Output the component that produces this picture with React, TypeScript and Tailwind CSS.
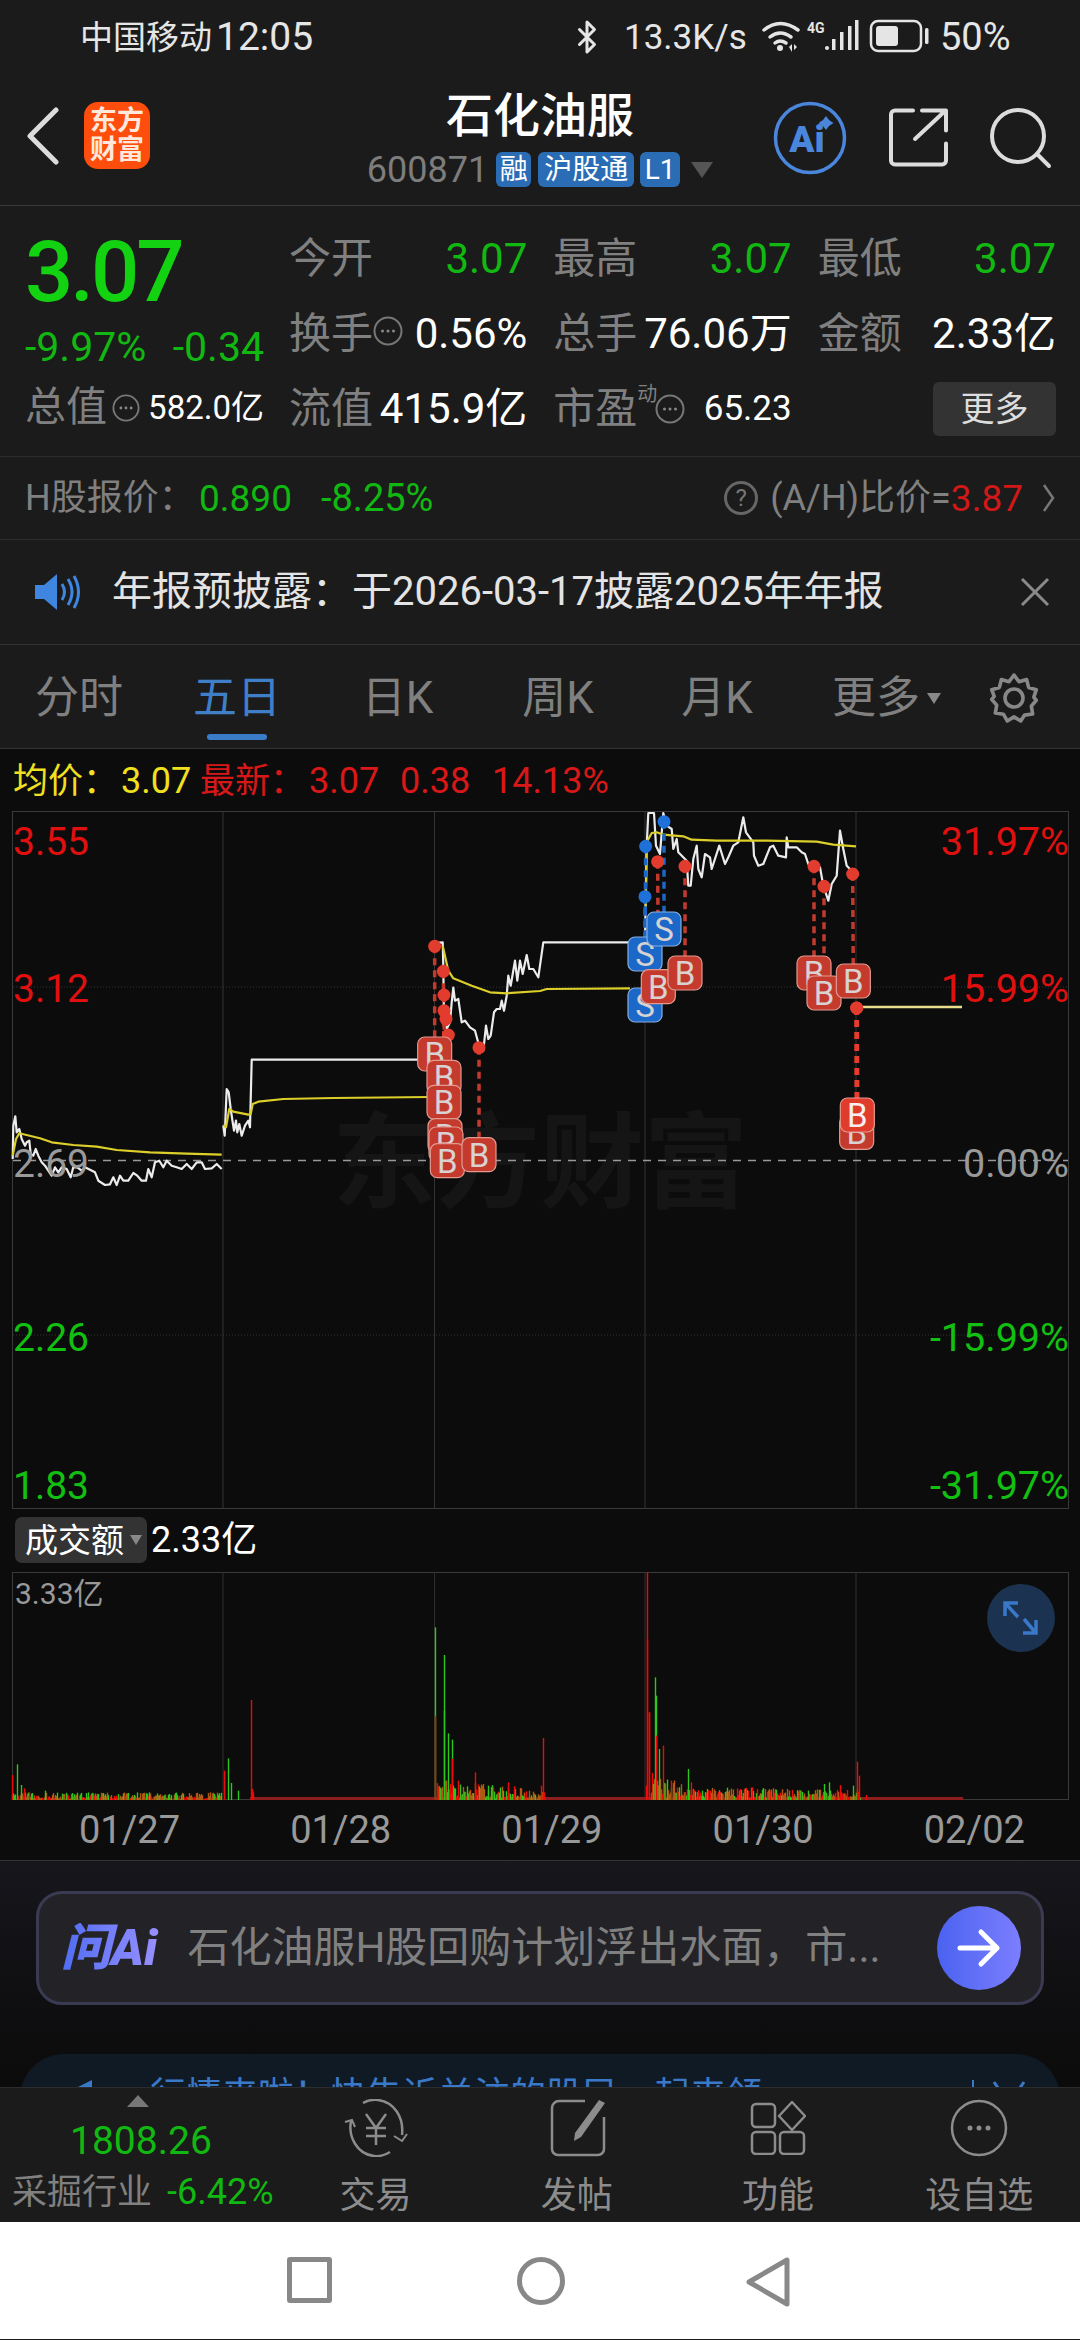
import { Bluetooth } from "lucide-react";

const fontStack = "[font-family:Roboto,'Noto_Sans_CJK_SC',sans-serif]";

// zoom-crop coordinates to page coordinates
function toPoints(raw: string, ox: number, oy: number) {
  return raw
    .trim()
    .split(/\s+/)
    .map((p) => {
      const [x, y] = p.split(",").map(Number);
      return `${(ox + x / 3).toFixed(1)},${(oy + y / 3).toFixed(1)}`;
    })
    .join(" ");
}

const day1Price = toPoints(
  "38,480 40,380 46,352 50,400 58,390 65,420 75,440 80,430 88,425 92,465 100,470 107,450 115,470 125,490 135,500 145,515 155,530 165,505 175,520 185,505 200,510 212,535 220,505 232,505 245,515 255,505 270,512 285,520 295,545 315,558 330,556 340,535 350,558 360,530 370,545 385,545 400,522 412,530 425,545 438,545 445,510 455,535 465,490 478,485 490,505 500,485 515,500 530,505 545,510 560,495 575,510 590,490 605,490 615,510 635,508 650,495 665,510",
  0,
  1000,
);
const day1Avg = toPoints(
  "38,470 48,420 58,403 120,418 155,430 220,438 290,443 350,453 450,460 560,464 665,467",
  0,
  1000,
);
const day2Price = toPoints(
  "670,380 674,410 680,270 686,280 692,330 698,370 702,395 708,365 712,400 718,375 725,410 735,380 745,365 750,385 755,182 1255,182",
  0,
  1000,
);
const day2Avg = toPoints(
  "670,378 678,385 688,330 700,338 745,347 752,345 758,315 775,308 850,300 1000,297 1290,294",
  0,
  1000,
);
const day3Price = toPoints(
  "104,462 128,460 130,530 132,700 140,720 150,700 155,640 160,596 165,635 175,630 185,700 195,695 210,715 225,725 240,780 250,785 258,710 265,750 272,740 282,670 290,660 300,660 305,635 312,665 320,620 325,560 332,590 345,515 352,575 360,515 368,555 380,498 388,540 400,540 415,565 430,460 690,460",
  400,
  790,
);
const day3Avg = toPoints(
  "128,470 145,545 160,568 215,590 270,610 320,613 420,606 440,600 690,598",
  400,
  790,
);
const day4Price = toPoints(
  "735,460 737,330 740,170 745,72 762,72 768,170 780,195 790,72 800,110 815,120 820,180 830,150 835,190 860,215 865,290 872,290 880,210 890,170 895,240 905,265 915,195 930,205 935,240 958,170 975,225 985,205 1000,170 1015,160 1030,85 1038,130 1060,160 1062,200 1075,230 1090,225 1110,175 1120,170 1135,200 1158,205 1160,145 1165,175 1190,175 1205,190 1215,195 1225,225 1260,235 1270,290 1285,335 1295,285 1310,260 1320,125 1330,180 1340,230 1355,245",
  400,
  790,
);
const day4Avg = toPoints(
  "737,370 740,160 755,132 770,130 790,137 850,142 875,152 950,155 1100,155 1250,158 1300,167 1368,172",
  400,
  790,
);

type Mark = { kind: "B" | "S"; dx: number; dy: number; bx: number; by: number };

const marks: Mark[] = [
  { kind: "B", dx: 104, dy: 472, bx: 104, by: 795 },
  { kind: "B", dx: 130, dy: 547, bx: 132, by: 865 },
  { kind: "B", dx: 132, dy: 618, bx: 132, by: 940 },
  { kind: "B", dx: 132, dy: 665, bx: 135, by: 1040 },
  { kind: "B", dx: 138, dy: 690, bx: 138, by: 1065 },
  { kind: "B", dx: 145, dy: 738, bx: 142, by: 1115 },
  { kind: "B", dx: 237, dy: 776, bx: 237, by: 1097 },
  { kind: "S", dx: 735, dy: 323, bx: 735, by: 648 },
  { kind: "S", dx: 737, dy: 172, bx: 735, by: 495 },
  { kind: "B", dx: 773, dy: 218, bx: 775, by: 593 },
  { kind: "S", dx: 792, dy: 98, bx: 792, by: 420 },
  { kind: "B", dx: 855, dy: 232, bx: 855, by: 552 },
  { kind: "B", dx: 1242, dy: 232, bx: 1242, by: 552 },
  { kind: "B", dx: 1272, dy: 292, bx: 1272, by: 612 },
  { kind: "B", dx: 1358, dy: 255, bx: 1360, by: 576 },
  { kind: "B", dx: 1370, dy: 657, bx: 1370, by: 1030 },
  { kind: "B", dx: 1370, dy: 657, bx: 1372, by: 978 },
];

const gridX = [223, 434.5, 645, 856];

function PriceChart() {
  return (
    <svg width={1080} height={698} viewBox="0 812 1080 698" className="block">
      <text x={540} y={1201} textAnchor="middle" fontSize={104} fontWeight={700} fill="#151515">
        东方财富
      </text>
      <rect x={12.5} y={812.5} width={1056} height={697} fill="none" stroke="#3a3a3a" />
      {gridX.map((x) => (
        <line key={x} x1={x} x2={x} y1={812} y2={1510} stroke="#333" />
      ))}
      <line x1={13} x2={1068} y1={988} y2={988} stroke="#333" strokeDasharray="1 2" />
      <line x1={13} x2={1068} y1={1336} y2={1336} stroke="#333" strokeDasharray="1 2" />
      <line x1={13} x2={1068} y1={1161.5} y2={1161.5} stroke="#999" strokeWidth={1.5} strokeDasharray="8 7" />

      {[day1Price, day2Price, day3Price, day4Price].map((pts, i) => (
        <polyline key={i} points={pts} fill="none" stroke="#ececec" strokeWidth={2.2} strokeLinejoin="round" />
      ))}
      {[day1Avg, day2Avg, day3Avg, day4Avg].map((pts, i) => (
        <polyline key={i} points={pts} fill="none" stroke="#dccf2a" strokeWidth={2.2} strokeLinejoin="round" />
      ))}
      <line x1={856} x2={962} y1={1008} y2={1008} stroke="#e8de8c" strokeWidth={2.4} />

      <g fontSize={39}>
        <text x={13} y={856} fill="#e01010">3.55</text>
        <text x={13} y={1003} fill="#e01010">3.12</text>
        <text x={13} y={1178} fill="#999">2.69</text>
        <text x={13} y={1352} fill="#12c012">2.26</text>
        <text x={13} y={1500} fill="#12c012">1.83</text>
      </g>
      <g fontSize={39.5} textAnchor="end">
        <text x={1069} y={856} fill="#e01010">31.97%</text>
        <text x={1069} y={1003} fill="#e01010">15.99%</text>
        <text x={1069} y={1178} fill="#999">0.00%</text>
        <text x={1069} y={1352} fill="#12c012">-15.99%</text>
        <text x={1069} y={1500} fill="#12c012">-31.97%</text>
      </g>

      {marks.map((m, i) => {
        const red = m.kind === "B";
        const color = red ? "#c23a2e" : "#1c66c4";
        const bright = i >= 15;
        return (
          <line
            key={i}
            x1={400 + m.dx / 3}
            y1={790 + m.dy / 3}
            x2={400 + m.bx / 3}
            y2={790 + m.by / 3}
            stroke={bright ? "#e63c2e" : color}
            strokeWidth={bright ? 4.5 : 3.5}
            strokeDasharray="7 5"
          />
        );
      })}
      {marks.map((m, i) => (
        <circle
          key={i}
          cx={400 + m.dx / 3}
          cy={790 + m.dy / 3}
          r={6.5}
          fill={m.kind === "B" ? "#e23c2e" : "#1f70d8"}
        />
      ))}
      {marks.map((m, i) => {
        const x = 400 + m.bx / 3;
        const y = 790 + m.by / 3;
        const red = m.kind === "B";
        return (
          <g key={i}>
            <rect
              x={x - 17}
              y={y - 17}
              width={34}
              height={34}
              rx={7}
              fill={red ? (i === 16 ? "#e03c2c" : "#c43b2e") : "#1b68c8"}
              stroke={red ? "#e29a90" : "#86aee0"}
              strokeWidth={1.2}
            />
            <text x={x} y={y + 12} textAnchor="middle" fontSize={33} fill={i === 16 ? "#f8eeee" : "#d8d2d2"}>
              {m.kind}
            </text>
          </g>
        );
      })}
    </svg>
  );
}

type Bar = { x: number; top: number; c: string };

const RED = "#ee0a0a";
const GREEN = "#2cc81c";

function rnd(i: number) {
  const v = Math.sin(i * 12.9898) * 43758.5453;
  return v - Math.floor(v);
}

function volumeBars() {
  const bars: Bar[] = [];
  const spikes: [number, number, string][] = [
    [18, 828, RED], [24, 796, GREEN], [30, 858, GREEN], [35, 868, RED], [42, 880, RED], [66, 875, GREEN],
    [325, 815, RED], [331, 778, GREEN], [336, 852, GREEN], [345, 875, GREEN], [365, 603, RED], [366, 870, RED], [368, 880, RED],
    [631, 385, GREEN], [631, 652, RED], [644, 468, GREEN], [645, 635, GREEN], [651, 703, GREEN], [656, 722, GREEN],
    [656, 780, RED], [665, 845, RED], [690, 820, RED], [708, 860, GREEN], [737, 850, RED], [747, 862, RED],
    [788, 717, RED], [786, 860, RED], [790, 880, RED],
    [938, 860, RED], [939, 220, RED], [940, 420, RED], [942, 640, RED], [943, 640, RED], [951, 535, GREEN], [953, 590, GREEN], [953, 710, RED],
    [957, 750, GREEN], [963, 740, RED], [975, 845, RED], [999, 810, GREEN], [1003, 850, RED], [1020, 875, GREEN],
    [1075, 870, RED], [1092, 865, RED], [1197, 855, GREEN], [1203, 850, GREEN], [1220, 858, RED], [1238, 860, GREEN],
    [1245, 788, RED], [1247, 830, RED], [1258, 888, RED],
  ];
  const noise: [number, number, number][] = [
    [18, 322, 20],
    [635, 790, 62],
    [945, 1010, 80],
    [1010, 1130, 34],
    [1130, 1250, 30],
  ];
  noise.forEach(([from, to, max], n) => {
    for (let d = from; d < to; d += 1.5) {
      const r = rnd(d + n * 7);
      const decay = n === 1 ? 1 - (d - from) / 260 : n === 2 ? 1 - (d - from) / 110 : 1;
      const h = 4 + r * max * decay;
      bars.push({ x: d, top: 904 - h, c: rnd(d * 3.1) > 0.5 ? "#b05a14" : rnd(d) > 0.55 ? GREEN : RED });
    }
  });
  spikes.forEach(([x, top, c]) => bars.push({ x, top, c }));
  return bars;
}

function VolumeChart() {
  const bars = volumeBars();
  return (
    <svg width={1080} height={228} viewBox="0 1573 1080 228" className="block">
      <line x1={12} x2={1069} y1={1573.5} y2={1573.5} stroke="#3a3a3a" />
      <line x1={12} x2={1069} y1={1800.5} y2={1800.5} stroke="#3a3a3a" />
      <line x1={12.5} x2={12.5} y1={1573} y2={1801} stroke="#3a3a3a" />
      <line x1={1068.5} x2={1068.5} y1={1573} y2={1801} stroke="#3a3a3a" />
      {gridX.map((x) => (
        <line key={x} x1={x} x2={x} y1={1573} y2={1801} stroke="#2e2e2e" />
      ))}
      <rect x={250} y={1798} width={713} height={3} fill="#8c1e1e" />
      {bars.map((b, i) => {
        const x = Math.round(b.x / 1.452) + 0.5;
        return <line key={i} x1={x} x2={x} y1={1500 + b.top / 3} y2={1801} stroke={b.c} strokeWidth={1.4} />;
      })}
      <text x={15} y={1605} fontSize={30} fill="#999">3.33亿</text>
      <circle cx={1021} cy={1619} r={34} fill="#1b3350" />
      <g stroke="#3a78c8" strokeWidth={3.5} fill="none">
        <path d="M1005 1617v-13h13" />
        <path d="M1006 1605l12 13" />
        <path d="M1036 1621v13h-13" />
        <path d="M1035 1633l-11-13" />
      </g>
    </svg>
  );
}

function DotCircle({ size }: { size: number }) {
  return (
    <svg width={size} height={size} viewBox="0 0 30 30" className="shrink-0">
      <circle cx={15} cy={15} r={13.5} fill="none" stroke="#777" strokeWidth={2} />
      <circle cx={9.5} cy={15} r={1.5} fill="#888" />
      <circle cx={15} cy={15} r={1.5} fill="#888" />
      <circle cx={20.5} cy={15} r={1.5} fill="#888" />
    </svg>
  );
}

function StatusIcons() {
  return (
    <svg width={170} height={36} viewBox="762 20 170 36" className="shrink-0">
      <g fill="none" stroke="#e5e5e5" strokeWidth={3.5} strokeLinecap="round">
        <path d="M764 31q16-13 34 0" />
        <path d="M770 38q10-8 21 0" />
        <path d="M775 44q5-4 11 0" />
      </g>
      <circle cx={780} cy={49} r={3} fill="#e5e5e5" />
      <path d="M789 48l3-3v8zM794 45l3 3-3 3z" fill="#e5e5e5" />
      <text x={807} y={34} fontSize={14} fontWeight={700} fill="#e5e5e5">4G</text>
      <g fill="#e5e5e5">
        <circle cx={827} cy={49} r={2} />
        <rect x={832} y={40} width={3.5} height={11} />
        <rect x={840} y={33} width={3.5} height={18} />
        <rect x={848} y={27} width={3.5} height={24} />
        <rect x={855} y={21} width={3.5} height={30} />
      </g>
      <rect x={871} y={22} width={50} height={30} rx={7} fill="none" stroke="#e5e5e5" strokeWidth={2.5} />
      <rect x={876} y={27} width={22} height={20} rx={3} fill="#e5e5e5" />
      <rect x={925} y={29} width={3.5} height={16} rx={1.5} fill="#e5e5e5" />
    </svg>
  );
}

function AiBadge() {
  return (
    <svg width={76} height={76} viewBox="770 101 76 76" className="shrink-0">
      <circle cx={808} cy={139} r={34.5} fill="none" stroke="#4a86dc" strokeWidth={3.5} />
      <text x={805} y={153} textAnchor="middle" fontSize={37} fontWeight={900} fill="#4a86dc">
        Ai
      </text>
      <path d="M824 117l3 4 4.500 3-4.500 3-3 4-3-4-4.500-3 4.500-3z" fill="#4a86dc" />
    </svg>
  );
}

function ShareIcon() {
  return (
    <svg width={60} height={60} viewBox="887 110 60 60" className="shrink-0">
      <path
        d="M911 112.500h-18a4 4 0 0 0-4 4v46a4 4 0 0 0 4 4h47a4 4 0 0 0 4-4v-17M913 141l30-28M920 112.500h24v20"
        fill="none"
        stroke="#dcdcdc"
        strokeWidth={4}
        strokeLinecap="round"
        strokeLinejoin="round"
      />
    </svg>
  );
}

function SearchIcon() {
  return (
    <svg width={62} height={62} viewBox="990 108 62 62" className="shrink-0">
      <circle cx={1018} cy={137} r={26} fill="none" stroke="#dcdcdc" strokeWidth={4} />
      <path d="M1037 155l12 12" stroke="#dcdcdc" strokeWidth={4} strokeLinecap="round" />
    </svg>
  );
}

function GearIcon() {
  return (
    <svg width={54} height={54} viewBox="0 0 24 24" fill="none" stroke="#888" strokeWidth={1.6} strokeLinejoin="round">
      <path d="M12 1.800l2.200 3 3.400-1 .9 3.500 3.400 1-1.100 3.400 1.100 1.300-2.200 2.600.6 3.500-3.600.5L15 22.200 12 20.400l-3 1.800-1.700-3-3.600-.5.6-3.500-2.200-2.600L3.200 11.300 2.100 8.300l3.400-1 .9-3.500 3.400 1z" />
      <circle cx={12} cy={12} r={4} />
    </svg>
  );
}

function TradeIcon() {
  return (
    <svg width={64} height={58} viewBox="0 0 64 58" fill="none" stroke="#8c8c8c" strokeWidth={2.5}>
      <path d="M19 4Q26 0 34 1C50 3 60 18 58 36" />
      <path d="M50 37l8 5 5-7" strokeWidth={2} />
      <path d="M46 53Q38 58 30 57C13 55 4 38 7 22" />
      <path d="M1 23l7-2 3 7" strokeWidth={2} />
      <path d="M22 15l10 14 10-14M32 29v17M22 29h20M22 37h20" />
    </svg>
  );
}

function PostIcon() {
  return (
    <svg width={60} height={58} viewBox="0 0 60 58" fill="none" stroke="#8c8c8c" strokeWidth={2.5}>
      <path d="M38 2H12a7 7 0 0 0-7 7v41a6 6 0 0 0 6 6h40a6 6 0 0 0 6-6V18" />
      <path d="M52 1l6 3-24 34-7 4 1-8z" fill="#8c8c8c" stroke="none" />
    </svg>
  );
}

function AppsIcon() {
  return (
    <svg width={56} height={54} viewBox="0 0 56 54" fill="none" stroke="#8c8c8c" strokeWidth={2.5}>
      <rect x={2} y={3} width={23} height={23} rx={4} />
      <path d="M42 1l13 14-13 14-13-14z" strokeLinejoin="round" />
      <rect x={2} y={31} width={23} height={22} rx={4} />
      <rect x={30} y={31} width={24} height={22} rx={4} />
    </svg>
  );
}

function MoreIcon() {
  return (
    <svg width={58} height={58} viewBox="0 0 58 58" fill="none">
      <circle cx={29} cy={29} r={27} stroke="#8c8c8c" strokeWidth={2.5} />
      <circle cx={20} cy={29} r={2.5} fill="#8c8c8c" />
      <circle cx={29} cy={29} r={2.5} fill="#8c8c8c" />
      <circle cx={38} cy={29} r={2.5} fill="#8c8c8c" />
    </svg>
  );
}

const tabs = [
  { label: "分时", w: "w-[158px]" },
  { label: "五日", w: "w-[158px]", active: true },
  { label: "日K", w: "w-[163px]" },
  { label: "周K", w: "w-[158px]" },
  { label: "月K", w: "w-[160px]" },
];

const bottomItems = [
  { label: "交易", icon: <TradeIcon /> },
  { label: "发帖", icon: <PostIcon /> },
  { label: "功能", icon: <AppsIcon /> },
  { label: "设自选", icon: <MoreIcon /> },
];

export default function App() {
  return (
    <div className={`${fontStack} flex h-[2340px] w-[1080px] flex-col overflow-hidden bg-[#1b1b1b] leading-none`}>
      {/* status bar */}
      <div className="flex h-[70px] shrink-0 items-center pt-[4px] pl-[80px] text-[#e6e6e6]">
        <span className="w-[136px] text-[33px]">中国移动</span>
        <span className="w-[353px] text-[39px]">12:05</span>
        <Bluetooth size={36} strokeWidth={2} className="shrink-0" />
        <span className="ml-[19px] w-[138px] text-[35px]">13.3K/s</span>
        <StatusIcons />
        <span className="ml-[8px] text-[38px]">50%</span>
      </div>

      {/* nav */}
      <div className="grid h-[136px] shrink-0 grid-cols-[1fr_auto_1fr] items-center border-b border-[#3a3a3a]">
        <div className="flex items-center pb-[4px]">
          <svg width={36} height={58} viewBox="0 0 36 58" className="ml-[25px]" fill="none">
            <path d="M31 3L5 29l26 26" stroke="#dcdcdc" strokeWidth={5} strokeLinecap="round" strokeLinejoin="round" />
          </svg>
          <div className="ml-[23px] flex h-[67px] w-[66px] flex-col items-center justify-center rounded-[14px] bg-[#ff4d0d] text-[27px] font-bold leading-[29px] text-[#ffe9dc]">
            <span>东方</span>
            <span>财富</span>
          </div>
        </div>
        <div className="flex flex-col items-center pt-[4px]">
          <div className="text-[47px] font-medium text-white">石化油服</div>
          <div className="mt-[13px] flex items-center">
            <span className="text-[36px] text-[#7d7d7d]">600871</span>
            <span className="ml-[8px] flex h-[35px] w-[35px] items-center justify-center rounded-[6px] bg-[#2b6db5] text-[28px] text-white">
              融
            </span>
            <span className="ml-[7px] flex h-[35px] w-[96px] items-center justify-center rounded-[6px] bg-[#2b6db5] text-[28px] text-white">
              沪股通
            </span>
            <span className="ml-[6px] flex h-[35px] w-[40px] items-center justify-center rounded-[6px] bg-[#2b6db5] text-[28px] text-white">
              L1
            </span>
            <span className="ml-[11px] h-0 w-0 border-x-[11px] border-t-[16px] border-x-transparent border-t-[#555]" />
          </div>
        </div>
        <div className="flex items-center justify-end pr-[28px]">
          <AiBadge />
          <span className="ml-[41px]">
            <ShareIcon />
          </span>
          <span className="ml-[41px]">
            <SearchIcon />
          </span>
        </div>
      </div>

      {/* quote */}
      <div className="flex h-[251px] shrink-0 border-b border-[#2c2c2c] pt-[15px] pl-[25px]">
        <div className="flex w-[239px] shrink-0 flex-col">
          <div className="flex h-[103px] items-center text-[85px] font-medium tracking-[-3px] text-[#12d212]">3.07</div>
          <div className="flex h-[46px] items-center justify-between text-[41px] text-[#12b812]">
            <span>-9.97%</span>
            <span>-0.34</span>
          </div>
          <div className="flex h-[75px] items-center">
            <span className="text-[41px] text-[#808080]">总值</span>
            <span className="ml-[5px]">
              <DotCircle size={28} />
            </span>
            <span className="ml-auto text-[33px] text-white">582.0亿</span>
          </div>
        </div>
        <div className="ml-[25px] grid w-[767px] shrink-0 grid-cols-3 grid-rows-[75px_75px_75px] gap-x-[26px] text-[42px]">
          {[
            ["今开", "3.07"],
            ["最高", "3.07"],
            ["最低", "3.07"],
          ].map(([k, v]) => (
            <div key={k} className="flex items-center justify-between">
              <span className="text-[#808080]">{k}</span>
              <span className="text-[#12b812]">{v}</span>
            </div>
          ))}
          <div className="flex items-center">
            <span className="text-[#808080]">换手</span>
            <span className="mb-[6px]">
              <DotCircle size={30} />
            </span>
            <span className="ml-auto text-white">0.56%</span>
          </div>
          <div className="flex items-center justify-between">
            <span className="text-[#808080]">总手</span>
            <span className="text-white">76.06万</span>
          </div>
          <div className="flex items-center justify-between">
            <span className="text-[#808080]">金额</span>
            <span className="text-white">2.33亿</span>
          </div>
          <div className="flex items-center justify-between">
            <span className="text-[#808080]">流值</span>
            <span className="text-white">415.9亿</span>
          </div>
          <div className="flex items-center">
            <span className="text-[#808080]">市盈</span>
            <span className="mb-[30px] text-[20px] text-[#808080]">动</span>
            <span className="mr-[-6px] ml-[-2px]">
              <DotCircle size={30} />
            </span>
            <span className="ml-auto text-[35px] text-white">65.23</span>
          </div>
          <div className="flex items-center justify-end">
            <span className="flex h-[54px] w-[123px] items-center justify-center rounded-[6px] bg-[#333] text-[34px] text-[#ddd]">
              更多
            </span>
          </div>
        </div>
      </div>

      {/* H share row */}
      <div className="flex h-[83px] shrink-0 items-center border-b border-[#2c2c2c] pl-[25px] text-[37px]">
        <span className="w-[174px] whitespace-nowrap text-[36px] text-[#808080]">{"H股报价\uFF1A"}</span>
        <span className="w-[122px] text-[#12b812]">0.890</span>
        <span className="text-[38px] text-[#12b812]">-8.25%</span>
        <span className="ml-auto flex h-[34px] w-[34px] items-center justify-center rounded-full border-[3px] border-[#666] text-[24px] text-[#777]">
          ?
        </span>
        <span className="ml-[12px] text-[36px] text-[#808080]">(A/H)比价=</span>
        <span className="text-[#d01818]">3.87</span>
        <svg width={14} height={30} viewBox="0 0 14 30" className="mr-[24px] ml-[19px]" fill="none">
          <path d="M2 2l9 13-9 13" stroke="#777" strokeWidth={2.5} />
        </svg>
      </div>

      {/* notice */}
      <div className="flex h-[105px] shrink-0 items-center border-b border-[#333] pl-[34px]">
        <svg width={46} height={38} viewBox="0 0 46 38" className="shrink-0">
          <path d="M1 12h9L23 1v36L10 26H1z" fill="#3f86e0" />
          <path d="M28 11q5 8 0 16M34 6q8 13 0 26M40 3q9 16 0 32" stroke="#3f86e0" strokeWidth={3} fill="none" />
        </svg>
        <span className="ml-[32px] text-[40px] text-[#e4e4e4]">{"年报预披露\uFF1A于2026-03-17披露2025年年报"}</span>
        <svg width={30} height={30} viewBox="0 0 30 30" className="mr-[30px] ml-auto shrink-0">
          <path d="M2 2l26 26M28 2L2 28" stroke="#8a8a8a" strokeWidth={3} />
        </svg>
      </div>

      {/* period tabs */}
      <div className="flex h-[104px] shrink-0 items-center border-b border-[#333]">
        {tabs.map((t) => (
          <div key={t.label} className={`relative flex h-full items-center justify-center pt-[3px] text-[44px] ${t.w} ${t.active ? "text-[#3f7fc8]" : "text-[#808080]"}`}>
            {t.label}
            {t.active ? <span className="absolute bottom-[8px] h-[6px] w-[60px] rounded-full bg-[#3a7cc8]" /> : null}
          </div>
        ))}
        <div className="flex items-center pt-[3px] pl-[35px] text-[44px] text-[#808080]">
          更多
          <span className="ml-[7px] h-0 w-0 border-x-[7px] border-t-[11px] border-x-transparent border-t-[#888]" />
        </div>
        <span className="ml-[46px] pt-[3px]">
          <GearIcon />
        </span>
      </div>

      {/* chart block */}
      <div className="flex shrink-0 flex-col bg-[#0c0c0c]">
        <div className="flex h-[62px] items-center pt-[2px] pl-[13px] text-[36px]">
          <span className="w-[108px] whitespace-nowrap text-[35px] text-[#f0e020]">{"均价\uFF1A"}</span>
          <span className="w-[79px] text-[#f0e020]">3.07</span>
          <span className="w-[109px] whitespace-nowrap text-[35px] text-[#d81818]">{"最新\uFF1A"}</span>
          <span className="w-[91px] text-[#d81818]">3.07</span>
          <span className="w-[92px] text-[#d81818]">0.38</span>
          <span className="text-[#d81818]">14.13%</span>
        </div>
        <PriceChart />
        <div className="flex h-[63px] items-start pt-[8px] pl-[15px]">
          <div className="flex h-[46px] w-[132px] items-center rounded-[7px] bg-[#333] pl-[10px] text-[33px] text-white">
            成交额
            <span className="ml-[6px] h-0 w-0 border-x-[6px] border-t-[10px] border-x-transparent border-t-[#888]" />
          </div>
          <span className="ml-[4px] flex h-[46px] items-center text-[36px] text-white">2.33亿</span>
        </div>
        <VolumeChart />
        <div className="grid h-[60px] grid-cols-5 items-center pl-[24px] text-[38px] text-[#999]">
          {["01/27", "01/28", "01/29", "01/30", "02/02"].map((d) => (
            <span key={d} className="w-[211px] text-center">
              {d}
            </span>
          ))}
        </div>
      </div>

      {/* ask ai */}
      <div className="relative h-[227px] shrink-0 overflow-hidden border-t border-[#333] bg-gradient-to-b from-[#16161c] to-[#0b0b0b]">
        <div className="mx-[36px] mt-[30px] flex h-[114px] items-center rounded-[26px] border-[3px] border-[#3a3a52] bg-[#232327] pl-[22px]">
          <span className="bg-gradient-to-r from-[#4f6cf2] to-[#9a90ff] bg-clip-text pr-[4px] text-[50px] font-black italic text-transparent">
            问Ai
          </span>
          <span className="ml-[26px] whitespace-nowrap text-[42px] text-[#808080]">{"石化油服H股回购计划浮出水面\uFF0C市..."}</span>
          <span className="mr-[20px] ml-auto flex h-[84px] w-[84px] shrink-0 items-center justify-center rounded-full bg-gradient-to-r from-[#4a62f0] to-[#7c7eff]">
            <svg width={44} height={40} viewBox="0 0 44 40" fill="none">
              <path d="M3 20h37M24 4l16 16-16 16" stroke="#fff" strokeWidth={5} strokeLinecap="round" strokeLinejoin="round" />
            </svg>
          </span>
        </div>
        <div className="mx-[20px] mt-[49px] flex h-[80px] items-start rounded-t-[44px] bg-[#101a25] pt-[24px] text-[36px] text-[#3a78c8]">
          <svg width={26} height={40} viewBox="0 0 26 40" className="ml-[48px] shrink-0">
            <path d="M24 2v36L0 26V14z" fill="#3a78c8" />
          </svg>
          <span className="ml-[56px]">{"行情来啦\uFF01快告诉关注的股民一起来领"}</span>
          <span className="mt-[2px] ml-auto h-[40px] w-[2px] bg-[#3a78c8]" />
          <svg width={34} height={30} viewBox="0 0 34 30" className="mt-[2px] mr-[34px] ml-[18px] shrink-0" fill="none">
            <path d="M2 2l15 22L32 2" stroke="#3a78c8" strokeWidth={3} />
          </svg>
        </div>
      </div>

      {/* bottom bar */}
      <div className="grid h-[135px] shrink-0 grid-cols-[275px_1fr_1fr_1fr_1fr] border-t border-[#2c2c2c] bg-[#1b1b1b]">
        <div className="flex min-w-0 flex-col pl-[12px]">
          <span className="mt-[7px] ml-[115px] h-0 w-0 border-x-[11px] border-b-[12px] border-x-transparent border-b-[#777]" />
          <span className="mt-[15px] ml-[58px] text-[39px] text-[#12b812]">1808.26</span>
          <div className="mt-[13px] flex items-center whitespace-nowrap">
            <span className="text-[35px] text-[#808080]">采掘行业</span>
            <span className="ml-[15px] text-[36px] text-[#12b812]">-6.42%</span>
          </div>
        </div>
        {bottomItems.map((item) => (
          <div key={item.label} className="flex flex-col items-center pt-[11px]">
            <div className="flex h-[58px] items-center">{item.icon}</div>
            <span className="mt-[21px] text-[36px] text-[#8c8c8c]">{item.label}</span>
          </div>
        ))}
      </div>

      {/* android nav */}
      <div className="flex h-[117px] shrink-0 items-start bg-white pt-[35px] pl-[287px]">
        <span className="h-[46px] w-[45px] rounded-[3px] border-[5px] border-[#888]" />
        <span className="ml-[185px] h-[48px] w-[48px] rounded-full border-[5px] border-[#888]" />
        <svg width={44} height={50} viewBox="0 0 44 50" className="ml-[181px]" fill="none">
          <path d="M41 3v44L3 25z" stroke="#888" strokeWidth={5} strokeLinejoin="round" />
        </svg>
      </div>
    </div>
  );
}
